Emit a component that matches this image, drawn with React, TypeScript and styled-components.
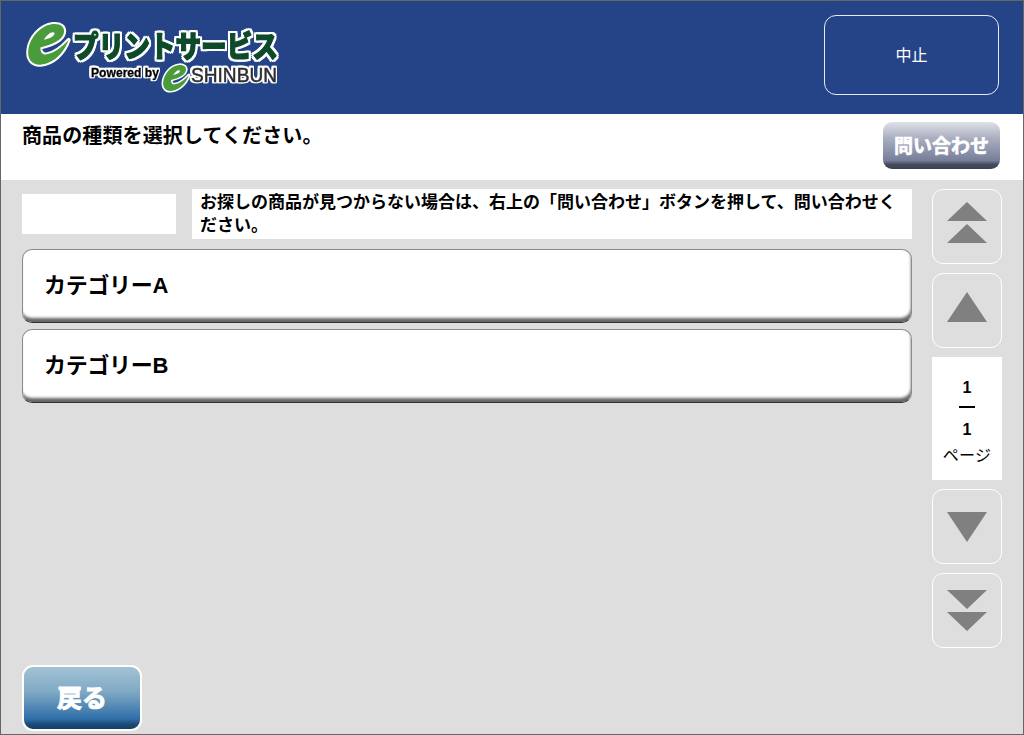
import React, { FC } from 'react';
import styled, { createGlobalStyle } from 'styled-components';

const fontStack = `"Liberation Sans", "Noto Sans CJK JP", sans-serif`;

const GlobalStyle = createGlobalStyle`
  html, body {
    margin: 0;
    padding: 0;
    width: 1024px;
    height: 735px;
    overflow: hidden;
    background: #dedede;
    font-family: ${fontStack};
    color: #000;
  }
  * { box-sizing: border-box; }
  button { font-family: inherit; padding: 0; cursor: pointer; }
`;

const Frame = styled.div`
  width: 1024px;
  height: 735px;
  border: 1px solid #666;
  display: flex;
  flex-direction: column;
  background: #dedede;
`;

const Header = styled.header`
  height: 113px;
  background: #254488;
  display: flex;
  justify-content: space-between;
  align-items: flex-start;
  padding: 14px 24px 0 23px;
`;

const LogoSvg = styled.svg`
  display: block;
  width: 258px;
  height: 76px;
  margin-top: 3px;
  overflow: visible;
`;

const LogoTitle = styled.text`
  font-family: "Noto Sans CJK JP", sans-serif;
  font-weight: 900;
  font-size: 30px;
  fill: #0d4a2b;
  stroke: #0d4a2b;
  stroke-width: 1.2px;
  stroke-linejoin: round;
  filter: drop-shadow(2px 0 0 #fff) drop-shadow(-2px 0 0 #fff) drop-shadow(0 2px 0 #fff) drop-shadow(0 -2px 0 #fff);
`;

const LogoPowered = styled.text`
  font-family: "Liberation Sans", sans-serif;
  font-weight: 700;
  font-size: 13px;
  fill: #000;
  stroke: #000;
  stroke-width: 0.3px;
  filter: drop-shadow(1.5px 0 0 #fff) drop-shadow(-1.5px 0 0 #fff) drop-shadow(0 1.5px 0 #fff) drop-shadow(0 -1.5px 0 #fff);
`;

const LogoBrand = styled.text`
  font-family: "Liberation Sans", sans-serif;
  font-size: 21px;
  fill: #2e2e2e;
  stroke: #2e2e2e;
  stroke-width: 0.5px;
  filter: drop-shadow(1.5px 0 0 #fff) drop-shadow(-1.5px 0 0 #fff) drop-shadow(0 1.5px 0 #fff) drop-shadow(0 -1.5px 0 #fff);
`;

const CancelButton = styled.button`
  width: 175px;
  height: 80px;
  border: 1px solid #e8ebf3;
  border-radius: 12px;
  background: transparent;
  color: #fff;
  font-size: 16px;
  padding-bottom: 2px;
`;

const SubHeader = styled.div`
  height: 66px;
  background: #fff;
  display: flex;
  justify-content: space-between;
  align-items: flex-start;
  padding: 8px 23px 0 21px;
`;

const Title = styled.h1`
  margin: 0;
  font-size: 20px;
  line-height: 28px;
  font-weight: 700;
  letter-spacing: 0.12px;
`;

const ContactButton = styled.button`
  width: 117px;
  height: 47px;
  border: none;
  border-radius: 9px;
  background: linear-gradient(#dfe1e8 0%, #a9aebf 35%, #767e9a 82%, #474b5c 90%, #3e414e 100%);
  color: #fff;
  font-size: 19px;
  font-weight: 700;
  -webkit-text-stroke: 0.6px #fff;
  padding-bottom: 2px;
`;

const Body = styled.main`
  flex: 1;
  display: flex;
  flex-direction: column;
  padding: 9px 21px 3px 21px;
`;

const Columns = styled.div`
  display: flex;
  gap: 20px;
`;

const MainColumn = styled.div`
  width: 890px;
  display: flex;
  flex-direction: column;
`;

const InfoRow = styled.div`
  display: flex;
  align-items: center;
  gap: 16px;
  margin-bottom: 10px;
`;

const BlankBox = styled.div`
  width: 154px;
  height: 40px;
  background: #fff;
`;

const Notice = styled.p`
  flex: 1;
  height: 50px;
  margin: 0;
  padding: 2px 8px 0;
  background: #fff;
  font-size: 17px;
  line-height: 23px;
  font-weight: 700;
`;

const CategoryList = styled.div`
  display: flex;
  flex-direction: column;
  gap: 6px;
`;

const CategoryButton = styled.button`
  height: 74px;
  padding: 0 0 7px 21px;
  text-align: left;
  background: #fff;
  color: #000;
  border: 1px solid #8c8c8c;
  border-bottom-color: #333;
  border-radius: 10px;
  box-shadow: inset -1px -5px 3px -1px #666;
  font-size: 22px;
  font-weight: 700;
  letter-spacing: -0.3px;
`;

const PagerColumn = styled.nav`
  width: 70px;
  display: flex;
  flex-direction: column;
  gap: 9px;
`;

const PagerButton = styled.button<{ $up?: boolean }>`
  height: 75px;
  border: 1.5px solid #fff;
  border-radius: 11px;
  background: transparent;
  display: flex;
  align-items: center;
  justify-content: center;
  padding-bottom: ${(p) => (p.$up ? '8px' : '0')};
`;

const PageBox = styled.div`
  height: 123px;
  background: #fff;
  display: flex;
  flex-direction: column;
  align-items: center;
  padding-top: 22px;
  font-size: 16px;
  font-weight: 700;
  line-height: 18px;
`;

const PageRule = styled.div`
  width: 16px;
  height: 2px;
  background: #000;
  margin: 9px 0 13px;
`;

const PageLabel = styled.div`
  margin-top: 7px;
  font-size: 16px;
  font-weight: 400;
  line-height: 20px;
  letter-spacing: 0.3px;
`;

const Footer = styled.footer`
  margin-top: 17px;
`;

const BackButton = styled.button`
  width: 120px;
  height: 66px;
  border: 2px solid #fff;
  border-radius: 11px;
  background: linear-gradient(#a3c3d5 0%, #7fa9c4 40%, #2f6ea8 84%, #1c4b78 92%, #173d63 100%);
  color: #fff;
  font-size: 25px;
  font-weight: 700;
  -webkit-text-stroke: 1px #fff;
  padding-bottom: 5px;
`;

const E_PATH =
  'M72 0C94-2 108 8 104 26C100 46 70 60 36 68C35 82 43 90 54 88C76 85 100 66 118 46C104 86 72 116 36 118C10 119-2 100 1 76C5 40 36 4 72 0Z' +
  'M46 46C54 32 66 22 74 24C79 26 78 31 71 36C63 41 54 44 46 46Z';

const LogoE: FC<{ x: number; y: number; scale: number; halo: number }> = ({ x, y, scale, halo }) => (
  <g transform={`translate(${x} ${y}) scale(${scale})`}>
    <path d={E_PATH} fill="#fff" stroke="#fff" strokeWidth={(halo * 2) / scale} strokeLinejoin="round" />
    <path d={E_PATH} fill="#4a9c3a" fillRule="evenodd" />
  </g>
);

const Logo: FC = () => (
  <LogoSvg viewBox="0 0 258 76">
    <LogoE x={4} y={6} scale={0.345} halo={2} />
    <LogoTitle x={49} y={39} textLength={205} lengthAdjust="spacingAndGlyphs">
      プリントサービス
    </LogoTitle>
    <LogoPowered x={67} y={59} textLength={68} lengthAdjust="spacingAndGlyphs">
      Powered by
    </LogoPowered>
    <LogoE x={139} y={47} scale={0.22} halo={1.6} />
    <LogoBrand x={167} y={64} textLength={86} lengthAdjust="spacingAndGlyphs">
      SHINBUN
    </LogoBrand>
  </LogoSvg>
);

const PagerArrow: FC<{ dir: 'up' | 'down'; double?: boolean }> = ({ dir, double }) => {
  if (double) {
    const d = dir === 'up' ? 'M20 0L40 19H0ZM20 22L40 41H0Z' : 'M0 0H40L20 19ZM0 22H40L20 41Z';
    return (
      <svg width="40" height="41" viewBox="0 0 40 41">
        <path d={d} fill="#808080" />
      </svg>
    );
  }
  const d = dir === 'up' ? 'M20 0L40 30H0Z' : 'M0 0H40L20 30Z';
  return (
    <svg width="40" height="30" viewBox="0 0 40 30">
      <path d={d} fill="#808080" />
    </svg>
  );
};

const App: FC = () => (
  <Frame>
    <GlobalStyle />
    <Header>
      <Logo />
      <CancelButton>中止</CancelButton>
    </Header>
    <SubHeader>
      <Title>商品の種類を選択してください。</Title>
      <ContactButton>問い合わせ</ContactButton>
    </SubHeader>
    <Body>
      <Columns>
        <MainColumn>
          <InfoRow>
            <BlankBox />
            <Notice>お探しの商品が見つからない場合は、右上の「問い合わせ」ボタンを押して、問い合わせください。</Notice>
          </InfoRow>
          <CategoryList>
            <CategoryButton>カテゴリーA</CategoryButton>
            <CategoryButton>カテゴリーB</CategoryButton>
          </CategoryList>
        </MainColumn>
        <PagerColumn>
          <PagerButton $up>
            <PagerArrow dir="up" double />
          </PagerButton>
          <PagerButton $up>
            <PagerArrow dir="up" />
          </PagerButton>
          <PageBox>
            <div>1</div>
            <PageRule />
            <div>1</div>
            <PageLabel>ページ</PageLabel>
          </PageBox>
          <PagerButton>
            <PagerArrow dir="down" />
          </PagerButton>
          <PagerButton>
            <PagerArrow dir="down" double />
          </PagerButton>
        </PagerColumn>
      </Columns>
      <Footer>
        <BackButton>戻る</BackButton>
      </Footer>
    </Body>
  </Frame>
);

export default App;
